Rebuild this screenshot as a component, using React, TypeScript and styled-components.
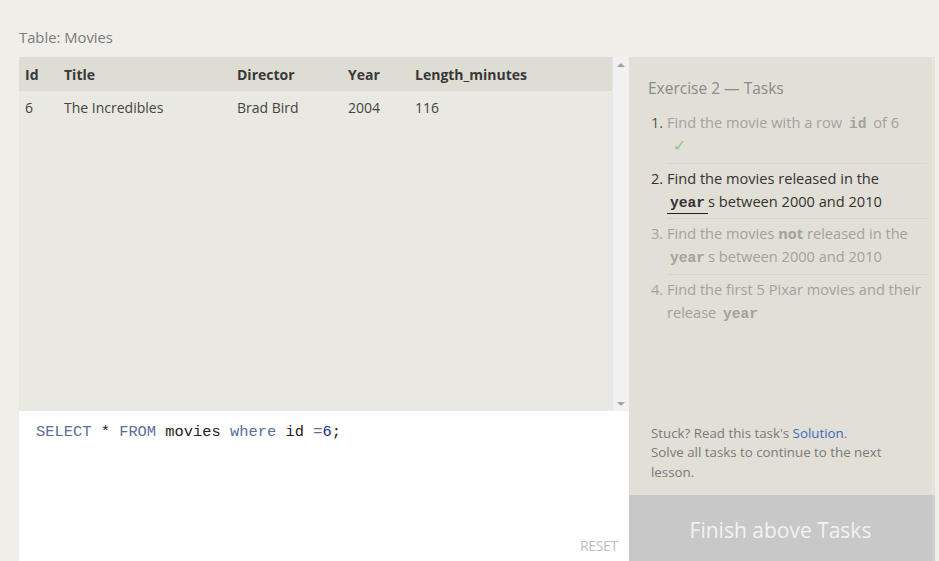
import * as React from "react";
import styled, { createGlobalStyle } from "styled-components";

const GlobalStyle = createGlobalStyle`
  html, body {
    margin: 0;
    padding: 0;
    background: #f0eee9;
    overflow: hidden;
  }
  body {
    font-family: "Open Sans", "Liberation Sans", sans-serif;
    color: #333;
  }
`;

const Page = styled.div`
  height: 561px;
  padding-left: 19px;
  display: flex;
  flex-direction: column;
`;

const TableLabel = styled.div`
  height: 57px;
  display: flex;
  align-items: center;
  padding-top: 17px;
  box-sizing: border-box;
  font-size: 14.8px;
  color: #7a7a7a;
`;

const Workspace = styled.div`
  display: grid;
  grid-template-columns: 610px 306px;
  flex: 1;
  min-height: 0;
`;

const LeftColumn = styled.div`
  display: flex;
  flex-direction: column;
`;

const TableArea = styled.div`
  height: 354px;
  display: flex;
  background: #e9e8e2;
`;

const TableScroll = styled.div`
  flex: 1;
`;

const DataTable = styled.table`
  width: 100%;
  table-layout: fixed;
  border-collapse: collapse;
  font-size: 14px;
`;

const HeadCell = styled.th<{ $width?: number }>`
  text-align: left;
  font-weight: 700;
  color: #383838;
  background: #deddd4;
  height: 34px;
  padding: 0 0 0 6px;
  box-sizing: border-box;
  width: ${(p) => (p.$width ? `${p.$width}px` : "auto")};
`;

const Cell = styled.td`
  height: 32px;
  padding: 0 0 0 6px;
  color: #444;
`;

const ScrollBar = styled.div`
  width: 17px;
  background: #f1f1f1;
  border-left: 1px solid #e6e6e6;
  box-sizing: border-box;
  display: flex;
  flex-direction: column;
  justify-content: space-between;
  align-items: center;
  padding: 6px 0 5px;
`;

const Arrow = styled.div<{ $down?: boolean }>`
  width: 0;
  height: 0;
  border-left: 4px solid transparent;
  border-right: 4px solid transparent;
  ${(p) =>
    p.$down ? "border-top: 4px solid #a3a3a3;" : "border-bottom: 4px solid #a3a3a3;"}
`;

const Editor = styled.div`
  flex: 1;
  background: #ffffff;
  position: relative;
  padding: 11px 0 0 17px;
`;

const CodeLine = styled.pre`
  margin: 0;
  font-family: "Liberation Mono", "DejaVu Sans Mono", monospace;
  font-size: 15.4px;
  line-height: 20px;
  color: #222;
`;

const Keyword = styled.span`
  color: #5a6e99;
`;

const NumberToken = styled.span`
  color: #1f2f8a;
`;

const ResetButton = styled.div`
  position: absolute;
  right: 11px;
  bottom: 6px;
  font-size: 14px;
  color: #bdbdbd;
  letter-spacing: -0.3px;
`;

const RightColumn = styled.div`
  display: flex;
  flex-direction: column;
`;

const TaskPanel = styled.div`
  height: 438px;
  background: #e1dfd6;
  border-right: 3px solid #e6e4dc;
  box-sizing: border-box;
  padding: 20px 5px 13px 19px;
  display: flex;
  flex-direction: column;
`;

const PanelTitle = styled.div`
  font-size: 15.5px;
  color: #8a8a8a;
  line-height: 22px;
  margin-bottom: 10px;
`;

const TaskList = styled.ol`
  list-style: none;
  margin: 0;
  padding: 0 0 0 19px;
  flex: 1;
`;

const TaskItem = styled.li<{ $state: "done" | "active" | "todo" }>`
  display: flex;
  font-size: 14.6px;
  line-height: 23px;
  padding: 2px 0 5.5px;
  color: ${(p) => (p.$state === "active" ? "#333" : "#a3a29d")};
  & + & {
    border-top: 1px solid #d6d4cb;
    padding-top: 3px;
  }
`;

const TaskNumber = styled.span<{ $dark?: boolean }>`
  width: 16px;
  margin-left: -16px;
  flex-shrink: 0;
  color: ${(p) => (p.$dark ? "#555" : "inherit")};
`;

const TaskText = styled.span`
  flex: 1;
`;

const Code = styled.code<{ $underline?: boolean }>`
  font-family: "Liberation Mono", "DejaVu Sans Mono", monospace;
  font-weight: 700;
  font-size: 14.6px;
  line-height: 1;
  margin: 0 3px;
  ${(p) => (p.$underline ? "border-bottom: 1.5px solid #222; padding: 0 3px 2px; margin: 0;" : "")}
`;

const Check = styled.div`
  color: #93c493;
  font-size: 16px;
  padding-left: 6px;
`;

const HelpText = styled.div`
  font-size: 13.3px;
  line-height: 19.5px;
  color: #7a7a7a;
  padding: 0 35px 0 3px;
`;

const SolutionLink = styled.a`
  color: #3b68c4;
  text-decoration: none;
`;

const FinishButton = styled.div`
  flex: 1;
  background: #c8c8c8;
  border-right: 3px solid #cfcfcf;
  display: flex;
  justify-content: center;
  padding-top: 21px;
  font-size: 21px;
  color: #f2f2f2;
`;

const columns = [
  { key: "id", label: "Id", width: 39 },
  { key: "title", label: "Title", width: 173 },
  { key: "director", label: "Director", width: 111 },
  { key: "year", label: "Year", width: 67 },
  { key: "length", label: "Length_minutes" },
];

const rows = [
  { id: 6, title: "The Incredibles", director: "Brad Bird", year: 2004, length: 116 },
];

export default function App() {
  return (
    <Page>
      <GlobalStyle />
      <TableLabel>Table: Movies</TableLabel>
      <Workspace>
        <LeftColumn>
          <TableArea>
            <TableScroll>
              <DataTable>
                <thead>
                  <tr>
                    {columns.map((c) => (
                      <HeadCell key={c.key} $width={c.width}>
                        {c.label}
                      </HeadCell>
                    ))}
                  </tr>
                </thead>
                <tbody>
                  {rows.map((r) => (
                    <tr key={r.id}>
                      <Cell>{r.id}</Cell>
                      <Cell>{r.title}</Cell>
                      <Cell>{r.director}</Cell>
                      <Cell>{r.year}</Cell>
                      <Cell>{r.length}</Cell>
                    </tr>
                  ))}
                </tbody>
              </DataTable>
            </TableScroll>
            <ScrollBar>
              <Arrow />
              <Arrow $down />
            </ScrollBar>
          </TableArea>
          <Editor>
            <CodeLine>
              <Keyword>SELECT</Keyword> * <Keyword>FROM</Keyword> movies{" "}
              <Keyword>where</Keyword> id <Keyword>=</Keyword>
              <NumberToken>6</NumberToken>;
            </CodeLine>
            <ResetButton>RESET</ResetButton>
          </Editor>
        </LeftColumn>
        <RightColumn>
          <TaskPanel>
            <PanelTitle>Exercise 2 — Tasks</PanelTitle>
            <TaskList>
              <TaskItem $state="done">
                <TaskNumber $dark>1.</TaskNumber>
                <TaskText>
                  Find the movie with a row <Code>id</Code> of 6
                  <Check>✓</Check>
                </TaskText>
              </TaskItem>
              <TaskItem $state="active">
                <TaskNumber>2.</TaskNumber>
                <TaskText>
                  Find the movies released in the <Code $underline>year</Code>s between
                  2000 and 2010
                </TaskText>
              </TaskItem>
              <TaskItem $state="todo">
                <TaskNumber>3.</TaskNumber>
                <TaskText>
                  Find the movies <b>not</b> released in the <Code>year</Code>s between
                  2000 and 2010
                </TaskText>
              </TaskItem>
              <TaskItem $state="todo">
                <TaskNumber>4.</TaskNumber>
                <TaskText>
                  Find the first 5 Pixar movies and their release <Code>year</Code>
                </TaskText>
              </TaskItem>
            </TaskList>
            <HelpText>
              Stuck? Read this task's <SolutionLink href="#">Solution</SolutionLink>.
              <br />
              Solve all tasks to continue to the next lesson.
            </HelpText>
          </TaskPanel>
          <FinishButton>Finish above Tasks</FinishButton>
        </RightColumn>
      </Workspace>
    </Page>
  );
}
